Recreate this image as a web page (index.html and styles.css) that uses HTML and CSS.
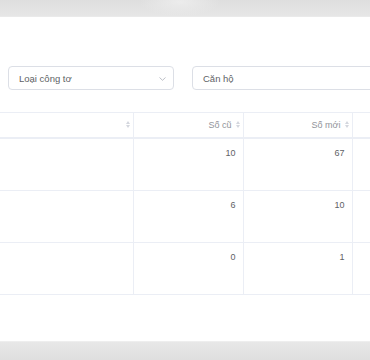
FILE: index.html
```html
<!DOCTYPE html>
<html lang="vi">
<head>
<meta charset="utf-8">
<link rel="stylesheet" href="styles.css">
</head>
<body>
<div class="topbar"></div>
<main class="panel">
  <div class="filters">
    <div class="select">
      <span class="select-text">Loại công tơ</span>
      <svg class="chevron" width="7" height="4" viewBox="0 0 7 4"><path d="M0.5 0.5 L3.5 3.3 L6.5 0.5" fill="none" stroke="#b4b8bf" stroke-width="0.9"/></svg>
    </div>
    <div class="select wide">
      <span class="select-text">Căn hộ</span>
    </div>
  </div>
  <div class="table-wrap">
    <table class="grid">
      <colgroup>
        <col class="c1"><col class="c2"><col class="c3"><col class="c4">
      </colgroup>
      <thead>
        <tr>
          <th><span class="sort"><i class="up"></i><i class="down"></i></span></th>
          <th>Số cũ<span class="sort"><i class="up"></i><i class="down"></i></span></th>
          <th>Số mới<span class="sort"><i class="up"></i><i class="down"></i></span></th>
          <th></th>
        </tr>
      </thead>
      <tbody>
        <tr><td></td><td>10</td><td>67</td><td></td></tr>
        <tr><td></td><td>6</td><td>10</td><td></td></tr>
        <tr><td></td><td>0</td><td>1</td><td></td></tr>
      </tbody>
    </table>
  </div>
</main>
<div class="bottombar"></div>
</body>
</html>
```
FILE: styles.css
```css
html, body {
  margin: 0;
  padding: 0;
}
body {
  width: 370px;
  height: 360px;
  overflow: hidden;
  display: flex;
  flex-direction: column;
  font-family: "Liberation Sans", Arial, sans-serif;
  background: #ffffff;
}
.topbar {
  height: 16px;
  flex: none;
  background: radial-gradient(ellipse 40px 14px at 180px 2px, #ececec, rgba(236,236,236,0)), linear-gradient(#dedede, #e6e6e6);
  border-bottom: 1px solid #eaeaea;
}
.panel {
  flex: 1;
  background: #fff;
  overflow: hidden;
}
.filters {
  display: flex;
  gap: 18px;
  padding: 49px 0 0 8px;
}
.select {
  flex: none;
  box-sizing: border-box;
  width: 166px;
  height: 24px;
  border: 1px solid #dcdfe6;
  border-radius: 4px;
  display: flex;
  align-items: center;
  justify-content: space-between;
  padding: 0 7px 0 10px;
}
.select.wide {
  width: 200px;
}
.select-text {
  font-size: 9.5px;
  color: #606266;
}
.chevron {
  display: block;
  margin-top: 1px;
}
.table-wrap {
  margin-top: 22px;
  overflow: hidden;
}
.grid {
  border-collapse: collapse;
  table-layout: fixed;
  width: 420px;
  font-size: 9px;
  color: #606266;
}
.c1 { width: 133px; }
.c2 { width: 110px; }
.c3 { width: 109px; }
.c4 { width: 68px; }
.grid th,
.grid td {
  border: 1px solid #ebeef5;
  text-align: right;
  padding: 0 7px;
}
.grid tr > :first-child {
  border-left: none;
}
.grid th {
  height: 24px;
  font-weight: normal;
  color: #909399;
  vertical-align: middle;
  border-bottom-width: 2px;
  white-space: nowrap;
}
.grid td {
  height: 52px;
  vertical-align: top;
  padding-top: 9px;
  padding-right: 7px;
  box-sizing: border-box;
}
.sort {
  display: inline-flex;
  flex-direction: column;
  gap: 1px;
  vertical-align: middle;
  margin-left: 4px;
  margin-right: -4px;
  position: relative;
  top: -1px;
}
.sort i {
  display: block;
  width: 0;
  height: 0;
  border-left: 2.5px solid transparent;
  border-right: 2.5px solid transparent;
}
.sort .up {
  border-bottom: 3px solid #d4d7de;
}
.sort .down {
  border-top: 3px solid #d4d7de;
}
.bottombar {
  height: 18px;
  flex: none;
  background: linear-gradient(#e8e8e8, #dfdfdf);
  border-top: 1px solid #eeeeee;
}
```
